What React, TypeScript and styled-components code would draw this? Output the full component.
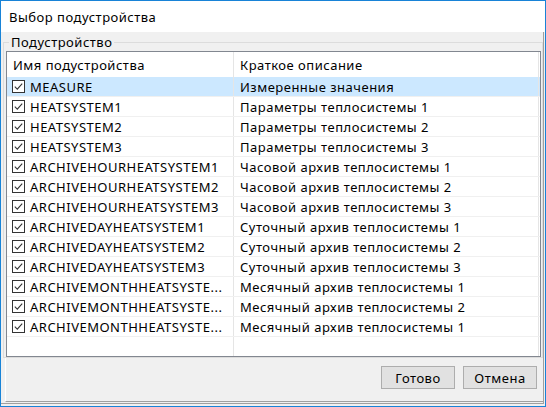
import React from "react";
import styled, { createGlobalStyle } from "styled-components";

const Global = createGlobalStyle`
  html, body { margin: 0; padding: 0; background: #ffffff; }
  * { box-sizing: border-box; }
`;

const FONT = `"Noto Sans", "Liberation Sans", sans-serif`;

const Window = styled.div`
  width: 546px;
  height: 407px;
  border: 1px solid #1883d7;
  background: #f0f0f0;
  display: flex;
  flex-direction: column;
  font-family: ${FONT};
  font-size: 13px;
  letter-spacing: 0.5px;
  color: #000;
`;

const TitleBar = styled.div`
  height: 31px;
  flex: none;
  background: #ffffff;
  display: flex;
  align-items: center;
  padding-left: 8px;
`;

const Body = styled.div`
  flex: 1;
  display: flex;
  flex-direction: column;
  padding: 3px 0 0 2px;
  margin: 0 1px 2px 0;
  border-right: 1px solid #a0a0a0;
  border-bottom: 1px solid #a0a0a0;
`;

const GroupBox = styled.fieldset`
  flex: none;
  margin: 0;
  min-width: 0;
  padding: 2px 1px 0 2px;
  border: 1px solid #dcdcdc;
`;

const Legend = styled.legend`
  margin-left: 3px;
  padding: 0 2px;
  line-height: 14px;
  font-size: 13px;
`;

const List = styled.div`
  width: 535px;
  height: 306px;
  border: 1px solid #828790;
  background: #ffffff;
  display: flex;
  flex-direction: column;
  overflow: hidden;
`;

const GridLine = styled.div<{ $h?: number; $selected?: boolean; $sep?: boolean }>`
  display: grid;
  grid-template-columns: 227px 305px;
  flex: ${(p) => (p.$h ? "none" : "1")};
  height: ${(p) => (p.$h ? `${p.$h}px` : "auto")};
  background: ${(p) => (p.$selected ? "#cce8ff" : "transparent")};
  border-bottom: ${(p) => (p.$sep ? "1px solid #f0f0f0" : "none")};
`;

const Cell = styled.div<{ $pad: number }>`
  display: flex;
  align-items: center;
  gap: 5px;
  padding-left: ${(p) => p.$pad}px;
  border-right: 1px solid #e5e5e5;
  white-space: nowrap;
  overflow: hidden;
  min-width: 0;
`;

const Footer = styled.div`
  flex: 1;
  display: flex;
  justify-content: flex-end;
  align-items: flex-start;
  gap: 8px;
  padding: 8px 6px 0 0;
  margin: 0 0 1px 2px;
  border-left: 1px solid #ffffff;
  border-bottom: 1px solid #a0a0a0;
`;

const Button = styled.button`
  width: 74px;
  height: 23px;
  padding: 0;
  border: 1px solid #adadad;
  background: #e1e1e1;
  font-family: ${FONT};
  font-size: 13px;
  letter-spacing: 0.5px;
  color: #000;
`;

const Check = () => (
  <svg width="13" height="13" viewBox="0 0 13 13" style={{ flex: "none" }}>
    <rect x="0.5" y="0.5" width="12" height="12" fill="#fff" stroke="#333" />
    <path d="M2.8 6.6 L5.3 9.1 L10.2 3.6" fill="none" stroke="#333" strokeWidth="1.1" />
  </svg>
);

const rows: [string, string][] = [
  ["MEASURE", "Измеренные значения"],
  ["HEATSYSTEM1", "Параметры теплосистемы 1"],
  ["HEATSYSTEM2", "Параметры теплосистемы 2"],
  ["HEATSYSTEM3", "Параметры теплосистемы 3"],
  ["ARCHIVEHOURHEATSYSTEM1", "Часовой архив теплосистемы 1"],
  ["ARCHIVEHOURHEATSYSTEM2", "Часовой архив теплосистемы 2"],
  ["ARCHIVEHOURHEATSYSTEM3", "Часовой архив теплосистемы 3"],
  ["ARCHIVEDAYHEATSYSTEM1", "Суточный архив теплосистемы 1"],
  ["ARCHIVEDAYHEATSYSTEM2", "Суточный архив теплосистемы 2"],
  ["ARCHIVEDAYHEATSYSTEM3", "Суточный архив теплосистемы 3"],
  ["ARCHIVEMONTHHEATSYSTE...", "Месячный архив теплосистемы 1"],
  ["ARCHIVEMONTHHEATSYSTE...", "Месячный архив теплосистемы 2"],
  ["ARCHIVEMONTHHEATSYSTE...", "Месячный архив теплосистемы 1"],
];

export default function App() {
  return (
    <>
      <Global />
      <Window>
        <TitleBar>Выбор подустройства</TitleBar>
        <Body>
          <GroupBox>
            <Legend>Подустройство</Legend>
            <List>
              <GridLine $h={25}>
                <Cell $pad={6}>Имя подустройства</Cell>
                <Cell $pad={6}>Краткое описание</Cell>
              </GridLine>
              {rows.map(([name, desc], i) => (
                <GridLine key={i} $h={20} $sep $selected={i === 0}>
                  <Cell $pad={5}>
                    <Check />
                    {name}
                  </Cell>
                  <Cell $pad={6}>{desc}</Cell>
                </GridLine>
              ))}
              <GridLine>
                <Cell $pad={6} />
                <Cell $pad={6} />
              </GridLine>
            </List>
          </GroupBox>
          <Footer>
            <Button>Готово</Button>
            <Button>Отмена</Button>
          </Footer>
        </Body>
      </Window>
    </>
  );
}
